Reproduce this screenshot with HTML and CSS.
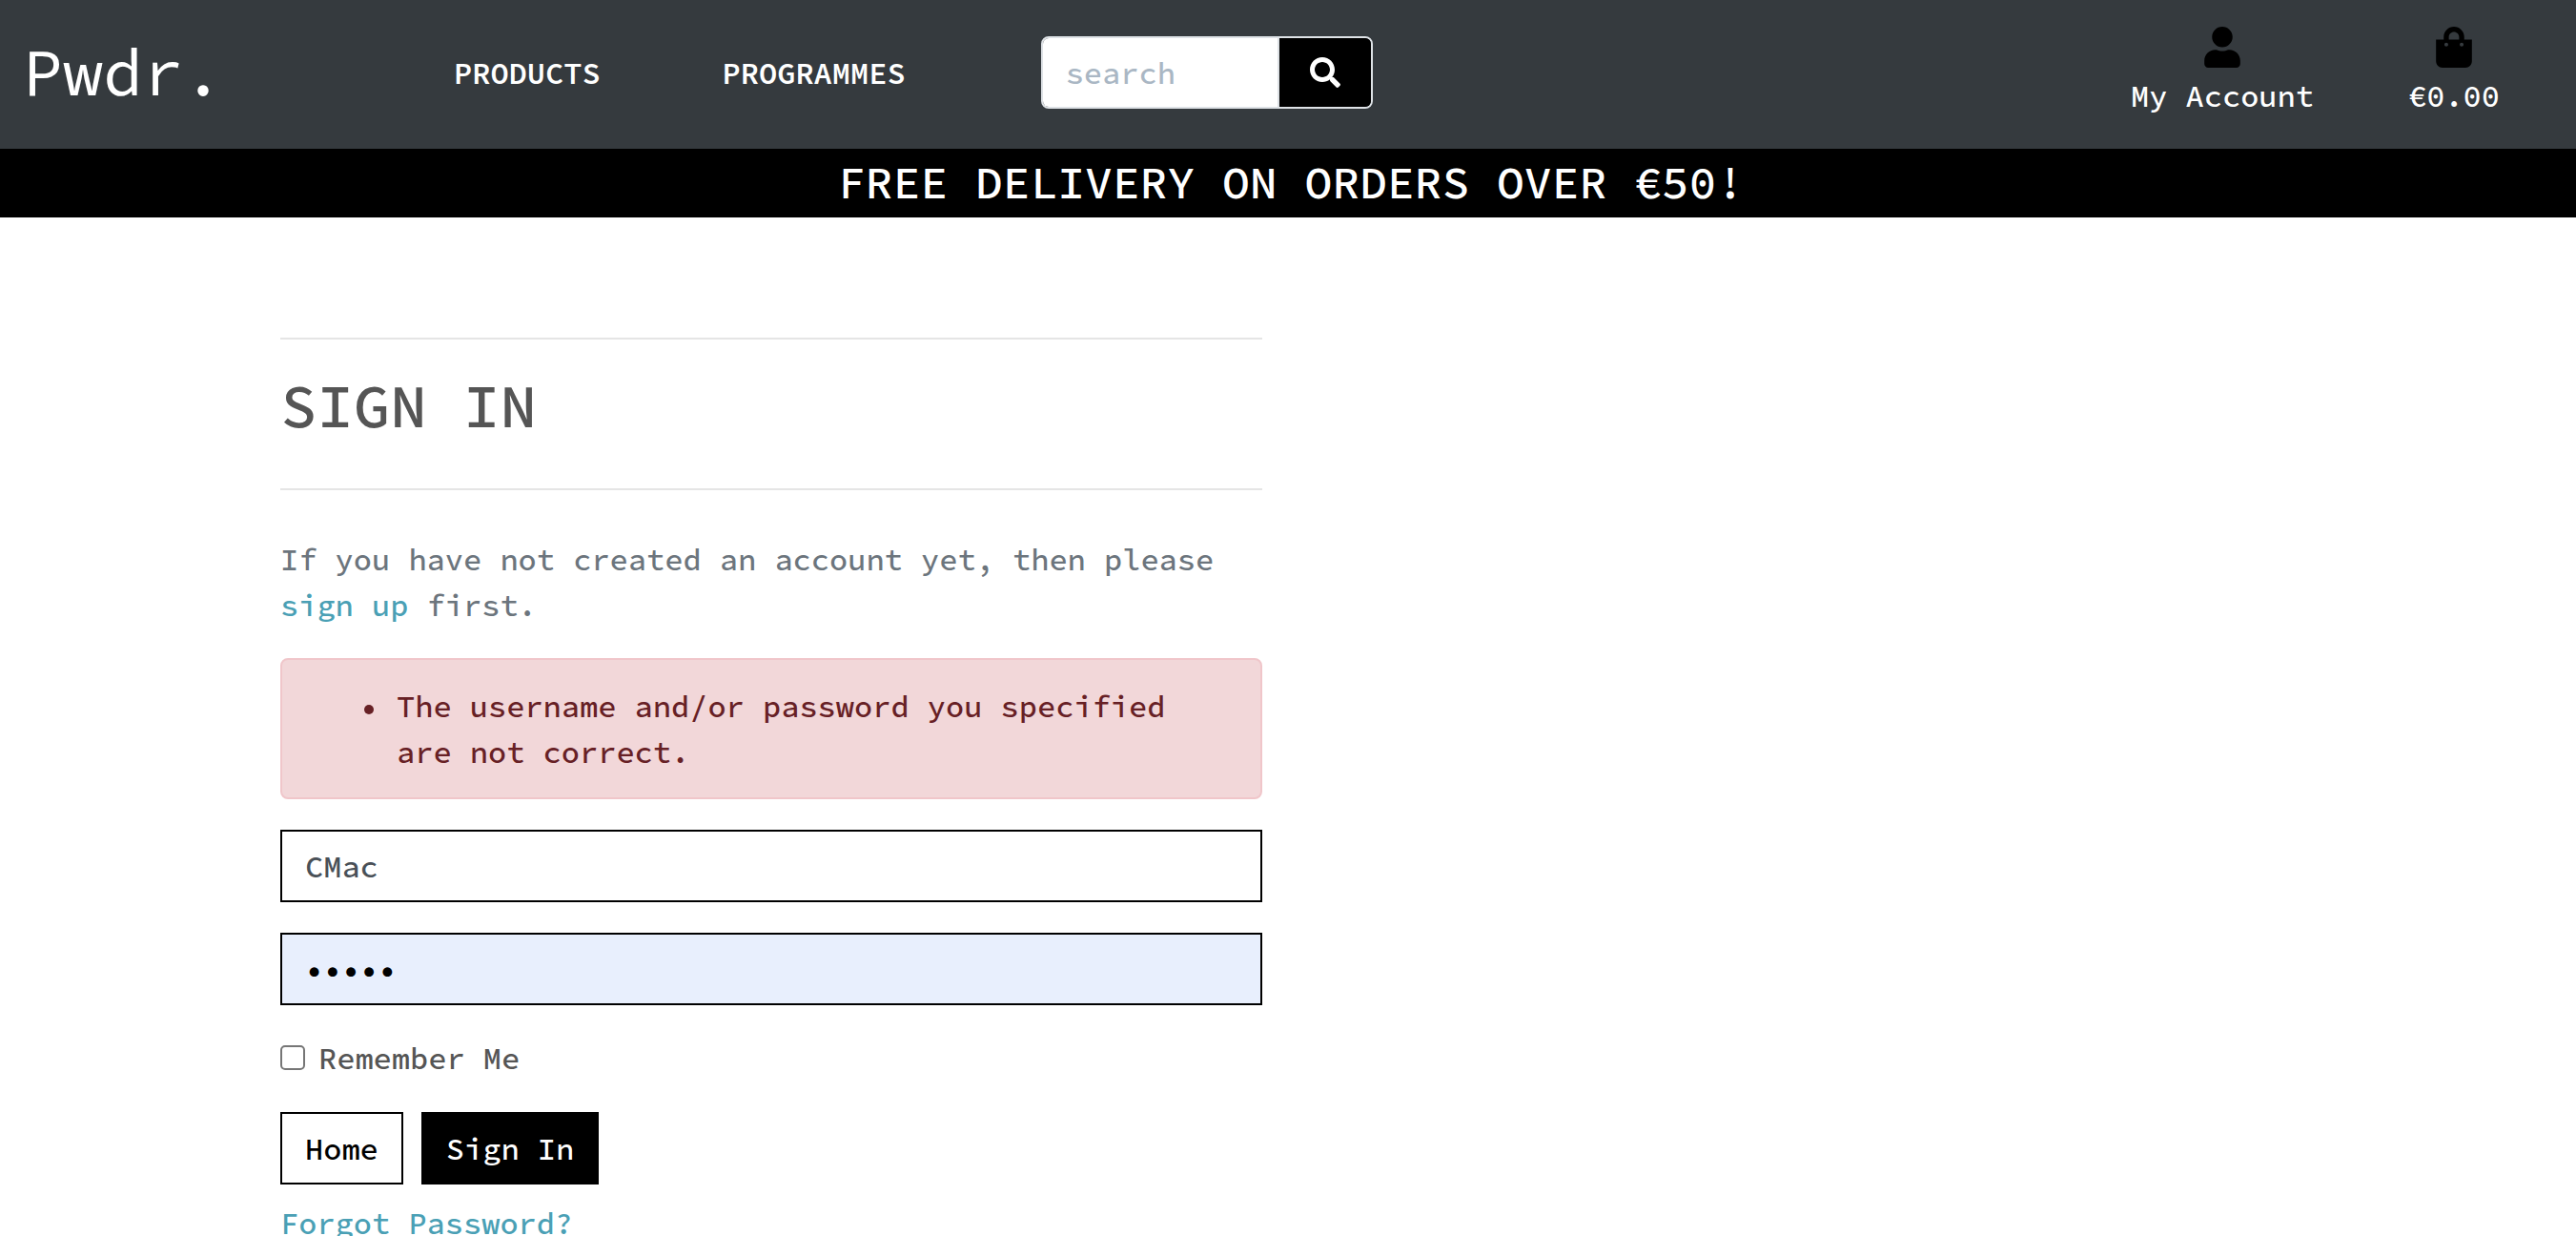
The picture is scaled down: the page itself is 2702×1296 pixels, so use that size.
FILE: index.html
```html
<!DOCTYPE html>
<html lang="en">
<head>
<meta charset="utf-8">
<meta name="viewport" content="width=device-width, initial-scale=1">
<title>Pwdr. | Sign In</title>
<link rel="stylesheet" href="styles.css">
</head>
<body>
<header class="topbar">
  <a class="brand" href="#">Pwdr.</a>
  <nav class="menu">
    <a class="menu-link" href="#">PRODUCTS</a>
    <a class="menu-link" href="#">PROGRAMMES</a>
  </nav>
  <form class="search" role="search">
    <input class="search-input" type="text" placeholder="search" aria-label="search">
    <button class="search-button" type="submit" aria-label="Submit search">
      <svg class="search-icon" viewBox="0 0 512 512" aria-hidden="true"><path d="M505 442.7L405.3 343c-4.5-4.5-10.6-7-17-7H372c27.6-35.3 44-79.7 44-128C416 93.1 322.9 0 208 0S0 93.1 0 208s93.1 208 208 208c48.3 0 92.7-16.4 128-44v16.3c0 6.4 2.5 12.5 7 17l99.7 99.7c9.4 9.4 24.6 9.4 33.9 0l28.3-28.3c9.4-9.4 9.4-24.6.1-34zM208 336c-70.7 0-128-57.2-128-128 0-70.7 57.2-128 128-128 70.7 0 128 57.2 128 128 0 70.7-57.2 128-128 128z"/></svg>
    </button>
  </form>
  <div class="shortcuts">
    <a class="shortcut" href="#">
      <svg class="shortcut-icon" viewBox="0 0 448 512" aria-hidden="true"><path d="M224 256c70.7 0 128-57.3 128-128S294.7 0 224 0 96 57.3 96 128s57.3 128 128 128zm89.6 32h-16.7c-22.2 10.2-46.9 16-72.9 16s-50.6-5.8-72.9-16h-16.7C60.2 288 0 348.2 0 422.4V464c0 26.5 21.5 48 48 48h352c26.5 0 48-21.5 48-48v-41.6c0-74.2-60.2-134.4-134.4-134.4z"/></svg>
      <span>My Account</span>
    </a>
    <a class="shortcut" href="#">
      <svg class="shortcut-icon" viewBox="0 0 448 512" aria-hidden="true"><path d="M352 160v-32C352 57.42 294.579 0 224 0 153.42 0 96 57.42 96 128v32H0v272c0 44.183 35.817 80 80 80h288c44.183 0 80-35.817 80-80V160h-96zm-192-32c0-35.29 28.71-64 64-64s64 28.71 64 64v32H160v-32zm160 120c-13.255 0-24-10.745-24-24s10.745-24 24-24 24 10.745 24 24-10.745 24-24 24zm-192 0c-13.255 0-24-10.745-24-24s10.745-24 24-24 24 10.745 24 24-10.745 24-24 24z"/></svg>
      <span>€0.00</span>
    </a>
  </div>
</header>
<div class="banner">FREE DELIVERY ON ORDERS OVER €50!</div>
<main class="page">
  <section class="panel">
    <h1 class="title">SIGN IN</h1>
    <p class="intro">If you have not created an account yet, then please <a class="link" href="#">sign up</a> first.</p>
    <form class="login">
      <div class="alert" role="alert">
        <ul class="alert-list">
          <li class="alert-item">The username and/or password you specified are not correct.</li>
        </ul>
      </div>
      <input class="field" type="text" value="CMac" aria-label="Username">
      <input class="field field-filled" type="password" value="12345" aria-label="Password">
      <div class="remember">
        <input class="tick" type="checkbox" id="remember">
        <label for="remember">Remember Me</label>
      </div>
      <div class="actions">
        <a class="button" href="#">Home</a>
        <button class="button button-dark" type="submit">Sign In</button>
      </div>
    </form>
    <a class="link forgot" href="#">Forgot Password?</a>
  </section>
</main>
</body>
</html>
```

FILE: styles.css
```css
* {
  box-sizing: border-box;
}

body {
  margin: 0;
  background: #fff;
  color: #555;
  font-family: "Source Code Pro", "Liberation Mono", monospace;
  font-size: 32px;
  font-weight: 500;
  line-height: 48px;
}

a {
  text-decoration: none;
}

input,
button {
  margin: 0;
  font: inherit;
}

.topbar {
  display: flex;
  align-items: center;
  min-height: 156px;
  padding: 0 80px 4px 24px;
  background: #353a3e;
}

.brand {
  margin-right: 242px;
  padding-bottom: 2px;
  color: #fff;
  font-size: 70px;
  font-weight: 400;
  line-height: 84px;
}

.menu {
  display: flex;
  gap: 128px;
  margin-right: 142px;
}

.menu-link {
  padding-top: 2px;
  color: #fff;
  font-weight: 600;
}

.search {
  display: flex;
  width: 348px;
  height: 76px;
  overflow: hidden;
  border: 2px solid #dee2e6;
  border-radius: 8px;
}

.search-input {
  flex: 1;
  min-width: 0;
  padding: 2px 24px 0;
  border: 0;
  border-right: 2px solid #dee2e6;
  background: #fff;
}

.search-input::placeholder {
  color: #aab7c4;
  opacity: 1;
}

.search-button {
  display: flex;
  align-items: center;
  justify-content: center;
  width: 96px;
  padding: 0;
  border: 0;
  background: #000;
}

.search-icon {
  width: 32px;
  height: 32px;
  fill: #fff;
}

.shortcuts {
  display: flex;
  gap: 99px;
  margin-left: auto;
}

.shortcut {
  display: flex;
  flex-direction: column;
  align-items: center;
  gap: 6px;
  color: #fff;
}

.shortcut-icon {
  width: 38px;
  height: 43px;
  fill: #000;
}

.banner {
  padding: 0 0 2px 6px;
  background: #000;
  color: #fff;
  font-size: 48px;
  line-height: 70px;
  text-align: center;
}

.page {
  display: grid;
  grid-template-columns: 1fr 1fr;
  gap: 54px;
  padding: 126px 294px 0;
}

.title {
  margin: 0 0 49px;
  padding: 32px 0 50px;
  border: solid #e5e5e5;
  border-width: 2px 0;
  font-size: 64px;
  font-weight: 500;
  line-height: 74px;
}

.intro {
  margin: 0 0 31px;
  color: #6c757d;
}

.link {
  color: #4aa0b5;
}

.login {
  display: grid;
  gap: 32px;
}

.alert {
  padding: 25px 40px 23px;
  border: 2px solid #f0c6ca;
  border-radius: 8px;
  background: #f2d7d9;
  color: #672025;
}

.alert-list {
  margin: 0;
  padding-left: 46px;
  list-style: none;
}

.alert-item {
  display: flex;
  gap: 24px;
}

.alert-item::before {
  content: "";
  flex: none;
  width: 10px;
  height: 10px;
  margin-top: 22px;
  border-radius: 50%;
  background: #672025;
}

.field {
  width: 100%;
  height: 76px;
  padding: 2px 24px 0;
  border: 2px solid #000;
  border-radius: 0;
  background: #fff;
  color: #495057;
}

.field-filled {
  background: #e8effd;
  color: #000;
}

.remember {
  display: flex;
  align-items: center;
  gap: 14px;
}

.tick {
  width: 26px;
  height: 26px;
  margin-bottom: 2px;
  appearance: none;
  border: 2px solid #767676;
  border-radius: 5px;
  background: #fff;
}

.actions {
  display: flex;
  gap: 19px;
}

.button {
  height: 76px;
  padding: 13px 24px 11px;
  border: 2px solid #000;
  background: #fff;
  color: #000;
  line-height: 48px;
}

.button-dark {
  background: #000;
  color: #fff;
}

.forgot {
  display: inline-block;
  margin-top: 17px;
}
```
